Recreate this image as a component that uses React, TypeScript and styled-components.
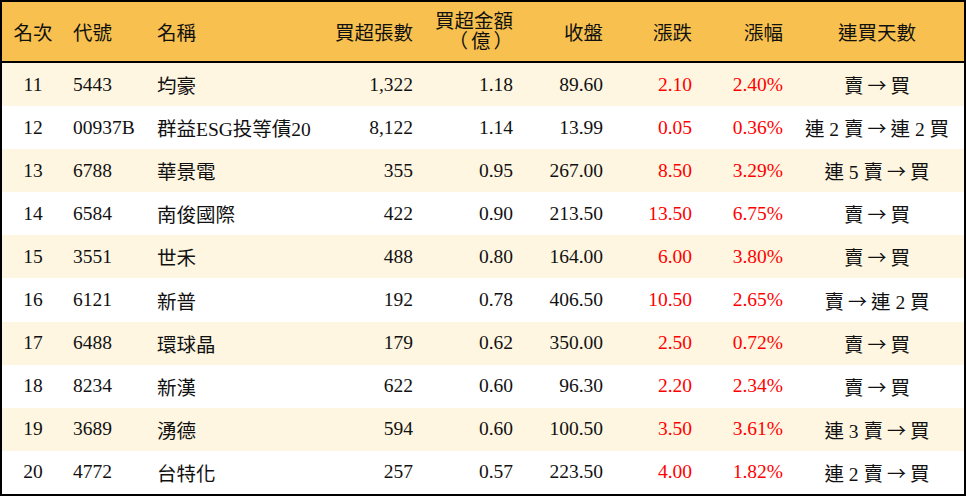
import React from 'react';
import styled, { createGlobalStyle } from 'styled-components';

const GlobalStyle = createGlobalStyle`
  * { box-sizing: border-box; }
  html, body { margin: 0; padding: 0; background: #ffffff; }
  body {
    font-family: "Liberation Serif", "Noto Sans CJK TC", serif;
    color: #111;
  }
`;

const COLUMNS = '62px 83px 173px 103px 100px 90px 89px 91px 1fr';

const Board = styled.div`
  width: 966px;
  height: 496px;
  border: 2px solid #000;
  display: flex;
  flex-direction: column;
  background: #fff;
`;

const HeadRow = styled.div`
  display: grid;
  grid-template-columns: ${COLUMNS};
  height: 61px;
  flex: none;
  background: #f8c14f;
  border-bottom: 2px solid #000;
`;

const Body = styled.div`
  flex: 1;
  display: grid;
  grid-template-rows: repeat(10, 1fr);
`;

const Row = styled.div<{ $shaded: boolean }>`
  display: grid;
  grid-template-columns: ${COLUMNS};
  background: ${p => (p.$shaded ? '#fef6e1' : '#ffffff')};
`;

type Align = 'left' | 'right' | 'center';

const Cell = styled.div<{ $align: Align; $pad?: number; $red?: boolean }>`
  display: flex;
  align-items: center;
  justify-content: ${p => (p.$align === 'left' ? 'flex-start' : p.$align === 'right' ? 'flex-end' : 'center')};
  text-align: ${p => p.$align};
  padding-left: ${p => (p.$align === 'left' ? p.$pad ?? 0 : 0)}px;
  padding-right: ${p => (p.$align === 'right' ? p.$pad ?? 10 : p.$align === 'center' ? p.$pad ?? 0 : 0)}px;
  font-size: 19.5px;
  color: ${p => (p.$red ? '#ff0000' : '#111')};
  white-space: nowrap;
`;

const TwoLine = styled.span`
  display: flex;
  flex-direction: column;
  align-items: flex-end;
  line-height: 20px;
`;

const Paren = styled.span`
  letter-spacing: 3px;
  margin-right: -3px;
`;

const Arrow = styled.span`
  font-family: "Noto Sans CJK TC", sans-serif;
  font-size: 19px;
  margin: 0 4px;
`;

type Stock = {
  rank: number;
  code: string;
  name: string;
  lots: string;
  amount: string;
  close: string;
  change: string;
  pct: string;
  sell: string;
  buy: string;
};

const stocks: Stock[] = [
  { rank: 11, code: '5443', name: '均豪', lots: '1,322', amount: '1.18', close: '89.60', change: '2.10', pct: '2.40%', sell: '賣', buy: '買' },
  { rank: 12, code: '00937B', name: '群益ESG投等債20', lots: '8,122', amount: '1.14', close: '13.99', change: '0.05', pct: '0.36%', sell: '連 2 賣', buy: '連 2 買' },
  { rank: 13, code: '6788', name: '華景電', lots: '355', amount: '0.95', close: '267.00', change: '8.50', pct: '3.29%', sell: '連 5 賣', buy: '買' },
  { rank: 14, code: '6584', name: '南俊國際', lots: '422', amount: '0.90', close: '213.50', change: '13.50', pct: '6.75%', sell: '賣', buy: '買' },
  { rank: 15, code: '3551', name: '世禾', lots: '488', amount: '0.80', close: '164.00', change: '6.00', pct: '3.80%', sell: '賣', buy: '買' },
  { rank: 16, code: '6121', name: '新普', lots: '192', amount: '0.78', close: '406.50', change: '10.50', pct: '2.65%', sell: '賣', buy: '連 2 買' },
  { rank: 17, code: '6488', name: '環球晶', lots: '179', amount: '0.62', close: '350.00', change: '2.50', pct: '0.72%', sell: '賣', buy: '買' },
  { rank: 18, code: '8234', name: '新漢', lots: '622', amount: '0.60', close: '96.30', change: '2.20', pct: '2.34%', sell: '賣', buy: '買' },
  { rank: 19, code: '3689', name: '湧德', lots: '594', amount: '0.60', close: '100.50', change: '3.50', pct: '3.61%', sell: '連 3 賣', buy: '買' },
  { rank: 20, code: '4772', name: '台特化', lots: '257', amount: '0.57', close: '223.50', change: '4.00', pct: '1.82%', sell: '連 2 賣', buy: '買' },
];

export default function App() {
  return (
    <>
      <GlobalStyle />
      <Board>
        <HeadRow>
          <Cell $align="center">名次</Cell>
          <Cell $align="left" $pad={9}>代號</Cell>
          <Cell $align="left" $pad={10}>名稱</Cell>
          <Cell $align="right">買超張數</Cell>
          <Cell $align="right">
            <TwoLine>
              <span>買超金額</span>
              <Paren>（億）</Paren>
            </TwoLine>
          </Cell>
          <Cell $align="right">收盤</Cell>
          <Cell $align="right">漲跌</Cell>
          <Cell $align="right">漲幅</Cell>
          <Cell $align="center" $pad={3}>連買天數</Cell>
        </HeadRow>
        <Body>
          {stocks.map((s, i) => (
            <Row key={s.rank} $shaded={i % 2 === 0}>
              <Cell $align="center">{s.rank}</Cell>
              <Cell $align="left" $pad={9}>{s.code}</Cell>
              <Cell $align="left" $pad={10}>{s.name}</Cell>
              <Cell $align="right">{s.lots}</Cell>
              <Cell $align="right">{s.amount}</Cell>
              <Cell $align="right">{s.close}</Cell>
              <Cell $align="right" $red>{s.change}</Cell>
              <Cell $align="right" $red>{s.pct}</Cell>
              <Cell $align="center" $pad={3}>
                {s.sell}
                <Arrow>→</Arrow>
                {s.buy}
              </Cell>
            </Row>
          ))}
        </Body>
      </Board>
    </>
  );
}
